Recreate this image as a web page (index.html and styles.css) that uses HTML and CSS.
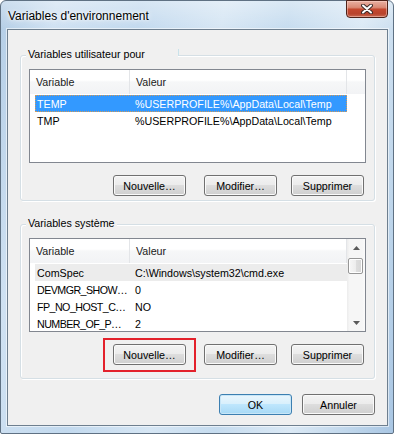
FILE: index.html
```html
<!DOCTYPE html>
<html lang="fr">
<head>
<meta charset="utf-8">
<title>Variables d'environnement</title>
<link rel="stylesheet" href="styles.css">
</head>
<body>
<div class="window">
  <div class="titlebar">
    <span class="title">Variables d'environnement</span>
    <div class="close">
      <svg width="12" height="10" viewBox="0 0 12 10">
        <path d="M2 1.5 L10 8.5 M10 1.5 L2 8.5" stroke="#3c2a28" stroke-width="4" stroke-linecap="round"/>
        <path d="M2 1.5 L10 8.5 M10 1.5 L2 8.5" stroke="#ffffff" stroke-width="2" stroke-linecap="round"/>
      </svg>
    </div>
  </div>
  <div class="client">
    <div class="group g1">
      <span class="group-label wide">Variables utilisateur pour</span>
      <div class="list">
        <div class="list-main">
          <div class="header">
            <div class="hcell hc1">Variable</div>
            <div class="hcell hc2">Valeur</div>
          </div>
          <div class="rows">
            <div class="row selected"><span class="c1">TEMP</span><span class="c2">%USERPROFILE%\AppData\Local\Temp</span></div>
            <div class="row"><span class="c1">TMP</span><span class="c2">%USERPROFILE%\AppData\Local\Temp</span></div>
          </div>
        </div>
      </div>
      <div class="buttons">
        <button class="btn b-new">Nouvelle…</button>
        <button class="btn b-mod">Modifier…</button>
        <button class="btn b-del">Supprimer</button>
      </div>
    </div>

    <div class="group g2">
      <span class="group-label">Variables système</span>
      <div class="list">
        <div class="list-main">
          <div class="header">
            <div class="hcell hc1">Variable</div>
            <div class="hcell hc2">Valeur</div>
          </div>
          <div class="rows">
            <div class="row inactive"><span class="c1">ComSpec</span><span class="c2">C:\Windows\system32\cmd.exe</span></div>
            <div class="row"><span class="c1 tight">DEVMGR_SHOW…</span><span class="c2">0</span></div>
            <div class="row"><span class="c1 tight">FP_NO_HOST_C…</span><span class="c2">NO</span></div>
            <div class="row"><span class="c1 tight">NUMBER_OF_P…</span><span class="c2">2</span></div>
          </div>
        </div>
        <div class="scrollbar">
          <div class="arrow">
            <svg width="7" height="4" viewBox="0 0 7 4"><path d="M3.5 0 L7 4 L0 4 Z" fill="#5a5a5a"/></svg>
          </div>
          <div class="track">
            <div class="thumb"></div>
          </div>
          <div class="arrow">
            <svg width="7" height="4" viewBox="0 0 7 4"><path d="M0 0 L7 0 L3.5 4 Z" fill="#5a5a5a"/></svg>
          </div>
        </div>
      </div>
      <div class="buttons">
        <button class="btn b-new highlight">Nouvelle…</button>
        <button class="btn b-mod">Modifier…</button>
        <button class="btn b-del">Supprimer</button>
      </div>
    </div>

    <div class="dialog-buttons">
      <button class="btn default">OK</button>
      <button class="btn">Annuler</button>
    </div>
  </div>
</div>
</body>
</html>
```
FILE: styles.css
```css
* { box-sizing: border-box; }

html, body {
  margin: 0;
  padding: 0;
  background: #ffffff;
}

body {
  font-family: "Liberation Sans", Arial, sans-serif;
  font-size: 10.7px;
  color: #000;
}

.window {
  width: 394px;
  height: 434px;
  border: 1px solid #5f7183;
  border-radius: 6px 6px 2px 2px;
  padding: 0 5px 7px 6px;
  display: flex;
  flex-direction: column;
  background:
    linear-gradient(180deg, rgba(255,255,255,0.35) 0%, rgba(255,255,255,0) 28px),
    linear-gradient(100deg, #b3cde6 0%, #cfe1f2 12%, #c2d9ee 30%, #d6e6f4 48%, #c6dcef 62%, #dbe9f5 78%, #bcd4ea 92%, #a9c6e3 100%);
}

.titlebar {
  height: 28px;
  flex: none;
  display: flex;
  justify-content: space-between;
  align-items: flex-start;
  padding-left: 1px;
}

.title {
  font-size: 12px;
  margin-top: 8px;
  color: #000;
  text-shadow: 0 0 6px #ffffff, 0 0 3px #ffffff;
}

.close {
  width: 42px;
  height: 18px;
  margin-top: -1px;
  border: 1px solid #4e2219;
  border-radius: 0 0 4px 4px;
  background: linear-gradient(180deg, #e9b0a2 0%, #da8a76 40%, #c4482f 52%, #b8442d 80%, #c96a52 100%);
  box-shadow: inset 0 0 0 1px rgba(255,220,210,0.45);
  display: flex;
  align-items: center;
  justify-content: center;
}

.client {
  flex: none;
  width: 381px;
  height: 397px;
  border: 1px solid #6e7f8f;
  box-shadow: 0 0 0 1px rgba(255,255,255,0.55);
  background: #f0f0f0;
  padding: 25px 12px 0 12px;
  display: flex;
  flex-direction: column;
}

.group {
  position: relative;
  border: 1px solid #d5dfe5;
  border-radius: 3px;
  box-shadow: inset 1px 1px 0 #ffffff, 1px 1px 0 #ffffff;
  padding: 13px 8px 0 8px;
  display: flex;
  flex-direction: column;
}

.g1 { height: 146px; }
.g2 { height: 155px; margin-top: 23px; }

.group-label {
  position: absolute;
  top: -8px;
  left: 5px;
  padding: 0 2px;
  line-height: 13px;
  background: #f0f0f0;
  color: #000;
}

.group-label.wide {
  width: 152px;
}

.group-label.wide::after {
  content: "";
  position: absolute;
  right: -1px;
  top: 1px;
  height: 7px;
  border-right: 1px solid #c9e2ea;
}

.list {
  height: 94px;
  border: 1px solid #828790;
  background: #ffffff;
  display: flex;
  overflow: hidden;
}

.list-main {
  flex: 1;
  min-width: 0;
}

.header {
  height: 24px;
  display: flex;
  background: linear-gradient(180deg, #ffffff 0%, #ffffff 42%, #f6f7f8 50%, #f2f3f5 100%);
}

.hcell {
  display: flex;
  align-items: center;
  padding-left: 6px;
  border-right: 1px solid #e3e5e8;
  color: #1a1a1a;
}

.hc1 { width: 100px; }
.hc2 { width: 217px; }

.rows {
  padding-top: 1px;
}

.row {
  height: 17px;
  width: 312px;
  margin-left: 5px;
  display: flex;
  align-items: center;
  white-space: nowrap;
  border: 1px solid transparent;
}

.row .c1 {
  width: 94px;
  flex: none;
  padding-left: 1px;
}

.row .c1.tight {
  letter-spacing: -0.55px;
}

.row .c2 {
  padding-left: 5px;
}

.row.selected {
  background: #3399ff;
  color: #ffffff;
  border: 1px dotted #d59a55;
}

.row.inactive {
  background: #ececec;
}

.scrollbar {
  width: 18px;
  flex: none;
  display: flex;
  flex-direction: column;
  background: linear-gradient(90deg, #ececec 0%, #f6f6f6 15%, #f6f6f6 85%, #fbfbfb 100%);
}

.arrow {
  height: 17px;
  display: flex;
  align-items: center;
  justify-content: center;
  flex: none;
}

.track {
  flex: 1;
  padding: 2px 1px 0 1px;
}

.thumb {
  width: 15px;
  height: 16px;
  border: 1px solid #979797;
  border-radius: 2px;
  background: linear-gradient(90deg, #f7f7f7 0%, #ededed 50%, #dedede 51%, #d6d6d6 100%);
  box-shadow: inset 0 0 0 1px #ffffff;
}

.buttons {
  display: flex;
  margin-top: 12px;
  padding-left: 84px;
}

.btn {
  position: relative;
  width: 73px;
  height: 21px;
  padding: 0;
  border: 1px solid #707070;
  border-radius: 3px;
  background: linear-gradient(180deg, #f3f3f3 0%, #ececec 45%, #dddddd 50%, #cfcfcf 100%);
  box-shadow: inset 0 0 0 1px #fafafa;
  font-family: "Liberation Sans", Arial, sans-serif;
  font-size: 10.7px;
  color: #000;
  display: flex;
  align-items: center;
  justify-content: center;
}

.b-mod { margin-left: 18px; }
.b-del { margin-left: 14px; }

.btn.default {
  border-color: #3c7fb1;
  background: linear-gradient(180deg, #eaf6fd 0%, #d9f0fc 45%, #bee6fd 50%, #a7d9f5 100%);
  box-shadow: inset 0 0 0 1px #c8e6f7;
}

.highlight::after {
  content: "";
  position: absolute;
  left: -11px;
  right: -11px;
  top: -7px;
  bottom: -8px;
  border: 2px solid #e3212b;
}

.dialog-buttons {
  display: flex;
  justify-content: flex-end;
  gap: 10px;
  margin-top: 15px;
}
```
